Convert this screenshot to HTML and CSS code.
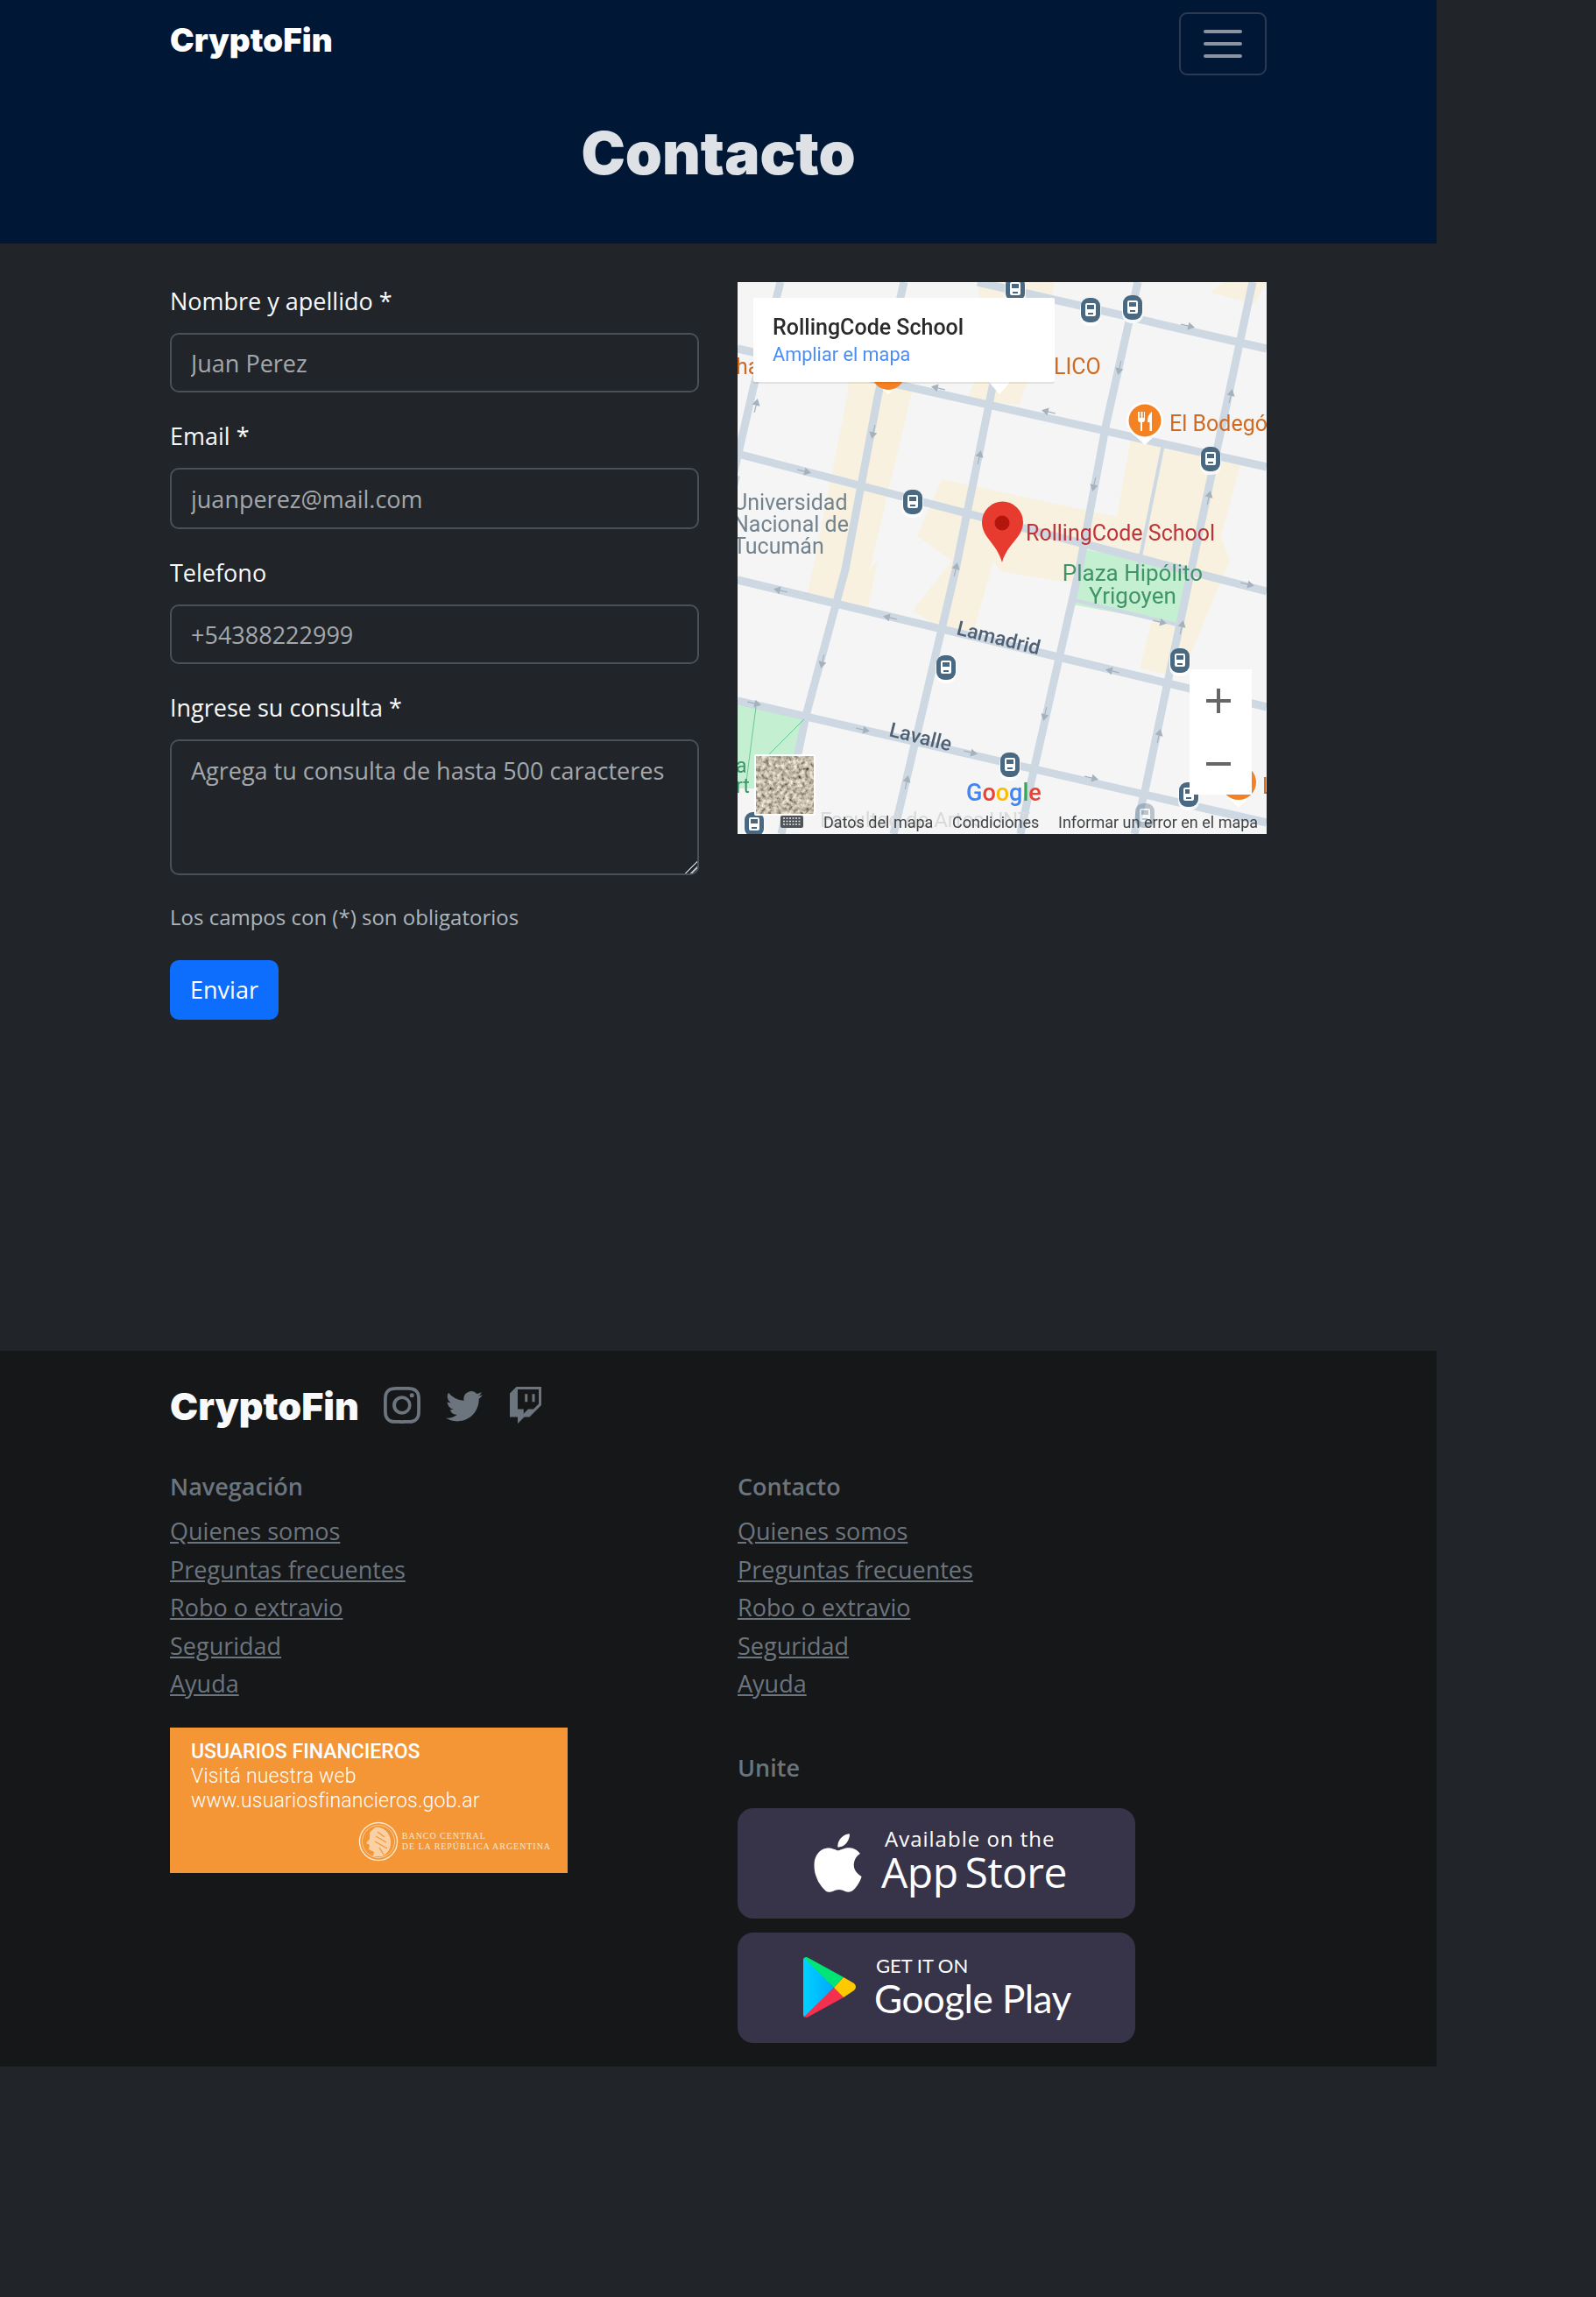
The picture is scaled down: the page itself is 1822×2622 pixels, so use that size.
FILE: index.html
```html
<!DOCTYPE html>
<html lang="es">
<head>
<meta charset="utf-8">
<title>CryptoFin - Contacto</title>
<link rel="stylesheet" href="styles.css">
</head>
<body>
<div class="page">
  <header class="hero">
    <nav class="topbar">
      <a class="brand" href="#">CryptoFin</a>
      <button class="toggler" type="button" aria-label="Menu"><span></span><span></span><span></span></button>
    </nav>
    <h1 class="hero-title">Contacto</h1>
  </header>

  <main class="main">
    <div class="cols">
      <form class="form">
        <div class="group">
          <label class="label">Nombre y apellido *</label>
          <input class="field" type="text" placeholder="Juan Perez">
        </div>
        <div class="group">
          <label class="label">Email *</label>
          <input class="field field-tall" type="email" placeholder="juanperez@mail.com">
        </div>
        <div class="group">
          <label class="label">Telefono</label>
          <input class="field" type="text" placeholder="+54388222999">
        </div>
        <div class="group group-last">
          <label class="label">Ingrese su consulta *</label>
          <textarea class="field area" placeholder="Agrega tu consulta de hasta 500 caracteres"></textarea>
        </div>
        <p class="hint">Los campos con (*) son obligatorios</p>
        <button class="send" type="button">Enviar</button>
      </form>

      <div class="map">
        <svg class="map-svg" viewBox="0 0 604 630" width="604" height="630" xmlns="http://www.w3.org/2000/svg">
          <defs>
            <filter id="soft" x="0" y="0" width="100%" height="100%"><feGaussianBlur stdDeviation="0.7"/></filter>
            <filter id="softer" x="-5%" y="-5%" width="110%" height="110%"><feGaussianBlur stdDeviation="0.45"/></filter>
            <filter id="sat" x="0" y="0" width="100%" height="100%">
              <feTurbulence type="fractalNoise" baseFrequency="0.22" numOctaves="3" seed="7"/>
              <feColorMatrix type="matrix" values="1.300 0 0 0 -0.100  1.250 0 0 0 -0.130  1.100 0 0 0 -0.150  0 0 0 0 1"/>
              <feGaussianBlur stdDeviation="0.6"/>
            </filter>
            <g id="bus">
              <rect x="-12" y="-14" width="24" height="31" rx="10" fill="#ffffff" opacity="0.8"/>
              <rect x="-11" y="-15" width="22" height="28" rx="9" fill="#4a6982"/>
              <rect x="-6" y="-9" width="12" height="15" rx="2" fill="#ffffff"/>
              <rect x="-4" y="-7" width="8" height="5" fill="#4a6982"/>
              <rect x="-3" y="2" width="6" height="2" fill="#4a6982"/>
            </g>
            <path id="arr" d="M-8 0H2M1 -3.500L7 0L1 3.500Z" fill="#a5b2bd" stroke="#a5b2bd" stroke-width="1.200"/>
          </defs>
          <g filter="url(#soft)">
            <rect width="604" height="630" fill="#f5f5f5"/>
            <g fill="#f8f1df">
              <polygon points="127,121 200,121 151,328 160,318 149,371 80,355 86,328"/>
              <polygon points="233,225 433,268 449,178 575,205 552,290 562,318 506,451 459,441 480,360 300,330 292,318 270,398 233,396 200,375 245,318 205,290"/>
              <polygon points="275,0 362,0 358,18 275,18"/>
              <polygon points="555,0 604,0 590,25 540,12"/>
              <polygon points="130,100 200,100 196,125 125,125"/>
              <polygon points="270,114 330,114 322,140 262,135"/>
            </g>
            <g fill="#c4f0d1">
              <polygon points="396,305 518,328 506,391 382,368"/>
              <polygon points="0,483 21,485 76,499 57,578 0,578"/>
            </g>
            <g fill="none" stroke="#cdd8e2" stroke-width="9">
              <path d="M274 0L604 76"/>
              <path d="M0 76L604 211"/>
              <path d="M0 196L604 353"/>
              <path d="M0 340L604 485"/>
              <path d="M0 478L604 617"/>
              <path d="M49 0L18 121L-5 221"/>
              <path d="M190 0L160 131L123 328L78 495L50 630"/>
              <path d="M320 0L292 115L249 328L192 571L178 630"/>
              <path d="M457 0L421 161L390 328L335 571L323 630"/>
              <path d="M588 0L555 155L518 328L465 581L453 630"/>
              <path d="M486 185L457 328" stroke-width="4"/>
              <path d="M0 221L-20 300L-20 350" stroke-width="6"/>
              <path d="M380 362L506 392" stroke-width="4"/>
            </g>
            <path d="M21 485L10 570M76 499L30 545" fill="none" stroke="#6cc596" stroke-width="1"/>
            <g>
              <use href="#arr" transform="translate(514 50) rotate(13)"/>
              <use href="#arr" transform="translate(229 121) rotate(193)"/>
              <use href="#arr" transform="translate(355 148) rotate(193)"/>
              <use href="#arr" transform="translate(76 216) rotate(13)"/>
              <use href="#arr" transform="translate(21 141) rotate(-77)"/>
              <use href="#arr" transform="translate(155 171) rotate(103)"/>
              <use href="#arr" transform="translate(276 200) rotate(-77)"/>
              <use href="#arr" transform="translate(436 98) rotate(103)"/>
              <use href="#arr" transform="translate(563 130) rotate(-77)"/>
              <use href="#arr" transform="translate(407 231) rotate(103)"/>
              <use href="#arr" transform="translate(538 246) rotate(-77)"/>
              <use href="#arr" transform="translate(49 352) rotate(193)"/>
              <use href="#arr" transform="translate(174 383) rotate(193)"/>
              <use href="#arr" transform="translate(249 328) rotate(-77)"/>
              <use href="#arr" transform="translate(582 345) rotate(13)"/>
              <use href="#arr" transform="translate(482 388) rotate(13)"/>
              <use href="#arr" transform="translate(507 394) rotate(-77)"/>
              <use href="#arr" transform="translate(97 433) rotate(103)"/>
              <use href="#arr" transform="translate(428 444) rotate(193)"/>
              <use href="#arr" transform="translate(19 481) rotate(13)"/>
              <use href="#arr" transform="translate(143 511) rotate(13)"/>
              <use href="#arr" transform="translate(266 537) rotate(13)"/>
              <use href="#arr" transform="translate(404 566) rotate(13)"/>
              <use href="#arr" transform="translate(351 493) rotate(103)"/>
              <use href="#arr" transform="translate(481 518) rotate(-77)"/>
              <use href="#arr" transform="translate(193 571) rotate(-77)"/>
            </g>
            <text class="m-faded" x="94" y="622">Facultad de Artes UNT</text>
            <use href="#bus" x="465" y="610" opacity="0.35"/>
            <use href="#bus" x="317" y="9"/>
            <use href="#bus" x="403" y="33"/>
            <use href="#bus" x="451" y="30"/>
            <use href="#bus" x="540" y="203"/>
            <use href="#bus" x="200" y="252"/>
            <use href="#bus" x="238" y="441"/>
            <use href="#bus" x="505" y="433"/>
            <use href="#bus" x="311" y="552"/>
            <use href="#bus" x="19" y="620"/>
            <use href="#bus" x="515" y="586"/>
            <g>
              <path d="M172 128L154 112H190Z" fill="#ffffff"/>
              <circle cx="172" cy="104" r="19" fill="#f58220"/>
              <path d="M299 128L285 112H313Z" fill="#ffffff"/>
              <path d="M465 186L446 168H484Z" fill="#ffffff"/>
              <circle cx="465" cy="158" r="21" fill="#ffffff"/>
              <circle cx="465" cy="158" r="18.500" fill="#f58220"/>
              <path d="M457 148V157Q457 160 460 160V170H462V160Q465 160 465 157V148H464V155H462.500V148H460.500V155H459V148ZM473 148Q468 151 468 160H470.500V170H473Z" fill="#ffffff"/>
              <path d="M572 600L552 580H592Z" fill="#ffffff"/>
              <circle cx="572" cy="571" r="20" fill="#f58220"/>
            </g>
            <g class="m-orange">
              <text x="-2" y="105">ha</text>
              <text x="361" y="105">LICO</text>
              <text x="493" y="170">El Bodegó</text>
              <text x="599" y="584">L</text>
            </g>
            <g class="m-uni">
              <text x="-5" y="260">Universidad</text>
              <text x="-5" y="285">Nacional de</text>
              <text x="-5" y="310">Tucumán</text>
            </g>
            <g class="m-park">
              <text x="451" y="341">Plaza Hipólito</text>
              <text x="451" y="367">Yrigoyen</text>
            </g>
            <g class="m-road">
              <text transform="translate(249 402) rotate(14)">Lamadrid</text>
              <text transform="translate(172 518) rotate(14)">Lavalle</text>
            </g>
            <g class="m-park-left">
              <text x="-2" y="560">a</text>
              <text x="-2" y="583">rt</text>
            </g>
            <text class="m-pin-label" x="329" y="295">RollingCode School</text>
            <path d="M302 320C296 298 279 292 279 274A23.500 23.500 0 0 1 326 274C326 292 308 298 302 320Z" fill="#e63b2e"/>
            <circle cx="302" cy="275" r="8.500" fill="#b3140d"/>
            <text class="m-google" x="261" y="592"><tspan fill="#4285f4">G</tspan><tspan fill="#ea4335">o</tspan><tspan fill="#fbbc05">o</tspan><tspan fill="#4285f4">g</tspan><tspan fill="#34a853">l</tspan><tspan fill="#ea4335">e</tspan></text>
            <g class="m-foot">
              <text x="98" y="623">Datos del mapa</text>
              <text x="245" y="623">Condiciones</text>
              <text x="366" y="623">Informar un error en el mapa</text>
            </g>
            <g>
              <rect x="49" y="609" width="26" height="14" rx="2" fill="#4d5357"/>
              <path d="M52 612H72M52 615.500H72M52 619H72" stroke="#e8e8e8" stroke-width="1.400" stroke-dasharray="2 1.500"/>
            </g>
            <rect x="19" y="539" width="70" height="70" rx="2" fill="#ffffff"/>
          </g>
          <rect x="21" y="541" width="66" height="66" filter="url(#sat)"/>
          <g filter="url(#softer)">
            <rect x="18" y="18" width="344" height="96" rx="2" fill="#000000" opacity="0.08" transform="translate(0 2)"/>
            <rect x="18" y="18" width="344" height="96" rx="2" fill="#ffffff"/>
            <text class="m-title" x="40" y="60">RollingCode School</text>
            <text class="m-link" x="40" y="90">Ampliar el mapa</text>
            <rect x="516" y="442" width="71" height="143" fill="#ffffff"/>
            <path d="M549 464V492M535 478H563M535 550H563" stroke="#666666" stroke-width="4" fill="none"/>
          </g>
        </svg>
      </div>
    </div>
  </main>

  <footer class="footer">
    <div class="foot-top">
      <a class="foot-brand" href="#">CryptoFin</a>
      <div class="socials">
        <svg class="soc soc-ig" viewBox="0 0 16 16"><path d="M8 0C5.829 0 5.556.01 4.703.048 3.85.088 3.269.222 2.76.42a3.917 3.917 0 0 0-1.417.923A3.927 3.927 0 0 0 .42 2.76C.222 3.268.087 3.85.048 4.7.01 5.555 0 5.827 0 8.001c0 2.172.01 2.444.048 3.297.04.852.174 1.433.372 1.942.205.526.478.972.923 1.417.444.445.89.719 1.416.923.51.198 1.09.333 1.942.372C5.555 15.99 5.827 16 8 16s2.444-.01 3.298-.048c.851-.04 1.434-.174 1.943-.372a3.916 3.916 0 0 0 1.416-.923c.445-.445.718-.891.923-1.417.197-.509.332-1.09.372-1.942C15.99 10.445 16 10.173 16 8s-.01-2.445-.048-3.299c-.04-.851-.175-1.433-.372-1.941a3.926 3.926 0 0 0-.923-1.417A3.911 3.911 0 0 0 13.24.42c-.51-.198-1.092-.333-1.943-.372C10.443.01 10.172 0 7.998 0h.003zm-.717 1.442h.718c2.136 0 2.389.007 3.232.046.78.035 1.204.166 1.486.275.373.145.64.319.92.599.28.28.453.546.598.92.11.281.24.705.275 1.485.039.843.047 1.096.047 3.231s-.008 2.389-.047 3.232c-.035.78-.166 1.203-.275 1.485a2.47 2.47 0 0 1-.599.919c-.28.28-.546.453-.92.598-.28.11-.704.24-1.485.276-.843.038-1.096.047-3.232.047s-2.39-.009-3.233-.047c-.78-.036-1.203-.166-1.485-.276a2.478 2.478 0 0 1-.92-.598 2.48 2.48 0 0 1-.6-.92c-.109-.281-.24-.705-.275-1.485-.038-.843-.046-1.096-.046-3.233 0-2.136.008-2.388.046-3.231.036-.78.166-1.204.276-1.486.145-.373.319-.64.599-.92.28-.28.546-.453.92-.598.282-.11.705-.24 1.485-.276.738-.034 1.024-.044 2.515-.045v.002zm4.988 1.328a.96.96 0 1 0 0 1.92.96.96 0 0 0 0-1.92zm-4.27 1.122a4.109 4.109 0 1 0 0 8.217 4.109 4.109 0 0 0 0-8.217zm0 1.441a2.667 2.667 0 1 1 0 5.334 2.667 2.667 0 0 1 0-5.334z"/></svg>
        <svg class="soc soc-tw" viewBox="0 0 16 16"><path d="M5.026 15c6.038 0 9.341-5.003 9.341-9.334 0-.14 0-.282-.006-.422A6.685 6.685 0 0 0 16 3.542a6.658 6.658 0 0 1-1.889.518 3.301 3.301 0 0 0 1.447-1.817 6.533 6.533 0 0 1-2.087.793A3.286 3.286 0 0 0 7.875 6.03a9.325 9.325 0 0 1-6.767-3.429 3.289 3.289 0 0 0 1.018 4.382A3.323 3.323 0 0 1 .64 6.575v.045a3.288 3.288 0 0 0 2.632 3.218 3.203 3.203 0 0 1-.865.115 3.23 3.23 0 0 1-.614-.057 3.283 3.283 0 0 0 3.067 2.277A6.588 6.588 0 0 1 .78 13.58a6.32 6.32 0 0 1-.78-.045A9.344 9.344 0 0 0 5.026 15z"/></svg>
        <svg class="soc soc-tc" viewBox="1 0 13.714 16"><path d="M3.857 0 1 2.857v10.286h3.429V16l2.857-2.857H9.57L14.714 8V0H3.857zm9.714 7.429-2.285 2.285H9l-2 2v-2H4.429V1.143h9.142v6.286z"/><path d="M11.857 3.143h-1.143V6.57h1.143V3.143zm-3.143 0H7.571V6.57h1.143V3.143z"/></svg>
      </div>
    </div>

    <div class="cols foot-cols">
      <div class="foot-col">
        <h5 class="foot-head">Navegación</h5>
        <ul class="links">
          <li><a href="#">Quienes somos</a></li>
          <li><a href="#">Preguntas frecuentes</a></li>
          <li><a href="#">Robo o extravio</a></li>
          <li><a href="#">Seguridad</a></li>
          <li><a href="#">Ayuda</a></li>
        </ul>
        <div class="banner">
          <div class="banner-strong">USUARIOS FINANCIEROS</div>
          <div class="banner-line">Visitá nuestra web</div>
          <div class="banner-line">www.usuariosfinancieros.gob.ar</div>
          <div class="bcra">
            <svg class="seal" viewBox="0 0 46 46" width="46" height="46">
              <circle cx="23" cy="23" r="21.500" fill="none" stroke="#fbe6cb" stroke-width="1.500"/>
              <circle cx="23" cy="23" r="18.500" fill="none" stroke="#fbe6cb" stroke-width="0.700"/>
              <path d="M19 7C27 5 36 12 37 22C38 30 34 37 27 40L17 40L18 35L12 32L13 27L9 25L13 20L13 13Z" fill="#fbe6cb" opacity="0.75"/>
              <path d="M22 12L30 18M20 17L32 24M19 23L33 31M24 30L29 38" stroke="#f49536" stroke-width="1.300" fill="none"/>
            </svg>
            <div class="bcra-text">
              <div class="bcra-one">BANCO CENTRAL</div>
              <div class="bcra-two">DE LA REPÚBLICA ARGENTINA</div>
            </div>
          </div>
        </div>
      </div>
      <div class="foot-col">
        <h5 class="foot-head">Contacto</h5>
        <ul class="links">
          <li><a href="#">Quienes somos</a></li>
          <li><a href="#">Preguntas frecuentes</a></li>
          <li><a href="#">Robo o extravio</a></li>
          <li><a href="#">Seguridad</a></li>
          <li><a href="#">Ayuda</a></li>
        </ul>
        <h5 class="foot-head foot-head-unite">Unite</h5>
        <a class="badge badge-apple" href="#">
          <svg class="apple" viewBox="0.9 0 13.700 16" fill="#ffffff"><path d="M11.182.008C11.148-.03 9.923.023 8.857 1.18c-1.066 1.156-.902 2.482-.878 2.516.024.034 1.52.087 2.475-1.258.955-1.345.762-2.391.728-2.43zm3.314 11.733c-.048-.096-2.325-1.234-2.113-3.422.212-2.189 1.675-2.789 1.698-2.854.023-.065-.597-.79-1.254-1.157a3.692 3.692 0 0 0-1.563-.434c-.108-.003-.483-.095-1.254.116-.508.139-1.653.589-1.968.607-.316.018-1.256-.522-2.267-.665-.647-.1-1.333.105-1.824.302-.49.197-1.422.759-2.074 2.242-.652 1.483-.311 3.832-.067 4.562.244.73.625 1.925 1.273 2.796.576.984 1.34 1.667 1.659 1.899.319.232 1.219.386 1.843.067.502-.308 1.408-.485 1.766-.472.357.013 1.061.154 1.782.539.571.197 1.111.115 1.652-.105.541-.221 1.324-1.059 2.238-2.758.347-.79.505-1.217.473-1.282z"/></svg>
          <span class="badge-text badge-text-apple">
            <span class="ap-small">Available on the</span>
            <span class="ap-big">App Store</span>
          </span>
        </a>
        <a class="badge badge-play" href="#">
          <svg class="play" viewBox="0 0 61 69" width="61" height="69">
            <defs>
              <linearGradient id="pb" x1="0" y1="0" x2="1" y2="0"><stop offset="0" stop-color="#00d2ff"/><stop offset="1" stop-color="#00a8ff"/></linearGradient>
            </defs>
            <path d="M0 3Q0 0 3 1L35 35L3 68Q0 69 0 66Z" fill="url(#pb)"/>
            <path d="M1 1Q3 -1 6 1L46 23L35 35Z" fill="#00e676"/>
            <path d="M1 68Q3 70 6 68L46 46L35 35Z" fill="#f5304f"/>
            <path d="M46 23L58 30Q62 34 58 38L46 46L35 35Z" fill="#ffc800"/>
          </svg>
          <span class="badge-text badge-text-play">
            <span class="gp-small">GET IT ON</span>
            <span class="gp-big">Google Play</span>
          </span>
        </a>
      </div>
    </div>
  </footer>
</div>
</body>
</html>
```
FILE: styles.css
```css
* { box-sizing: border-box; }
html, body { margin: 0; padding: 0; }
body {
  background: #212529;
  color: #f8f9fa;
  font-family: "Open Sans", "Noto Sans", sans-serif;
  font-size: 27px;
  min-height: 2622px;
}
a { color: inherit; }
.page { width: 1640px; }

.hero { background: #001736; height: 278px; padding: 14px 194px 0 194px; }
.topbar { display: flex; justify-content: space-between; align-items: flex-start; }
.brand {
  font-family: Inter, sans-serif;
  font-weight: 900;
  font-size: 37px;
  line-height: 64px;
  color: #ffffff;
  text-decoration: none;
}
.toggler {
  width: 100px;
  height: 72px;
  background: transparent;
  border: 2px solid #2b3a52;
  border-radius: 9px;
  display: flex;
  flex-direction: column;
  align-items: center;
  justify-content: center;
  gap: 10px;
  padding: 0;
}
.toggler span { display: block; width: 44px; height: 4px; border-radius: 2px; background: #8b93a1; }
.hero-title {
  margin: 49px -194px 0;
  text-align: center;
  font-family: Inter, sans-serif;
  font-weight: 900;
  font-size: 67.500px;
  line-height: 80px;
  color: #dee2e6;
}

.main { min-height: 1264px; padding: 44px 194px 0 194px; }
.cols { display: grid; grid-template-columns: 604px 604px; column-gap: 44px; }
.form { padding-top: 2px; }
.group { margin-bottom: 30px; }
.group-last { margin-bottom: 0; }
.label { display: block; line-height: 40px; margin-bottom: 16px; color: #f8f9fa; }
.field {
  display: block;
  width: 100%;
  height: 68px;
  padding: 0 22px;
  background: #212529;
  border: 2px solid #495057;
  border-radius: 10px;
  color: #dee2e6;
  font-family: inherit;
  font-size: 27px;
  outline: none;
}
.field-tall { height: 70px; }
.area { height: 155px; padding: 13px 22px; line-height: 42px; resize: vertical; }
.area::-webkit-resizer {
  background: linear-gradient(135deg, transparent 50%, #b5b8bb 50%, #b5b8bb 58%, transparent 58%, transparent 72%, #b5b8bb 72%, #b5b8bb 80%, transparent 80%);
}
.field::placeholder { color: #a4a8ac; opacity: 1; }
.hint { margin: 30px 0 0; font-size: 24px; line-height: 36px; color: #adb5bd; }
.send {
  display: block;
  margin-top: 31px;
  width: 124px;
  height: 68px;
  padding: 0 0 2px;
  border: 0;
  border-radius: 10px;
  background: #0d6efd;
  color: #ffffff;
  font-family: inherit;
  font-size: 27px;
}

.map { width: 604px; height: 630px; overflow: hidden; }
.map-svg { display: block; }
.map-svg text { font-family: Roboto, sans-serif; }
.m-orange text { font-size: 25px; fill: #d06a20; }
.m-uni text { font-size: 25px; fill: #72838f; }
.m-park text { font-size: 26px; fill: #3f9469; text-anchor: middle; }
.m-road text { font-size: 23px; font-weight: 500; fill: #4f6175; }
.m-park-left text { font-size: 23px; fill: #3f9469; }
.m-pin-label { font-size: 25px; fill: #bd3537; }
.m-faded { font-size: 24px; fill: #dadada; }
.m-google { font-size: 27px; font-weight: 500; }
.m-foot text { font-size: 18px; fill: #3f4447; }
.m-title { font-size: 25px; font-weight: 500; fill: #2c2c2c; }
.m-link { font-size: 21.700px; fill: #4a8df5; }

.footer { background: #161719; height: 817px; padding: 33px 194px 0 194px; color: #6c757d; }
.foot-top { display: flex; align-items: center; height: 60px; }
.foot-brand {
  font-family: Inter, sans-serif;
  font-weight: 900;
  font-size: 43px;
  line-height: 60px;
  color: #f8f9fa;
  text-decoration: none;
  width: 244px;
  white-space: nowrap;
}
.socials { display: flex; align-items: center; height: 42px; margin-top: -2px; }
.soc { display: block; fill: #6c757d; }
.soc-ig { width: 42px; height: 42px; }
.soc-tw { width: 42px; height: 42px; margin-left: 29px; }
.soc-tc { width: 36px; height: 42px; margin-left: 31px; }

.foot-cols { margin-top: 41px; }
.foot-head { margin: 0 0 8px; font-size: 27px; line-height: 42px; font-weight: 600; color: #6c757d; }
.foot-head-unite { margin: 53px 0 25px; }
.links { list-style: none; margin: 0; padding: 0; }
.links li { height: 43.500px; line-height: 43.500px; }
.links a { color: #6c757d; text-decoration: underline; }

.banner {
  margin-top: 28px;
  width: 454px;
  height: 166px;
  background: #f49536;
  padding: 14px 24px 0 24px;
  color: #ffffff;
  font-family: Roboto, sans-serif;
}
.banner-strong { font-size: 23px; line-height: 28px; font-weight: 500; }
.banner-line { font-size: 23px; line-height: 28px; font-weight: 300; letter-spacing: 0.200px; }
.bcra { display: flex; justify-content: flex-end; align-items: center; gap: 4px; margin-top: 9px; margin-right: -5px; }
.bcra-text { font-family: "Liberation Serif", serif; color: #fbe6cb; font-size: 10px; line-height: 12px; letter-spacing: 0.950px; white-space: nowrap; }

.badge {
  display: flex;
  align-items: center;
  width: 454px;
  height: 126px;
  border-radius: 18px;
  background: #37344a;
  color: #ffffff;
  text-decoration: none;
  margin-bottom: 16px;
}
.badge-apple { padding-left: 85px; gap: 22px; }
.badge-play { padding-left: 75px; gap: 20px; }
.apple { width: 57px; height: 67px; display: block; }
.badge-text { display: flex; flex-direction: column; }
.badge-text-apple { padding-bottom: 10px; }
.badge-text-play { padding-bottom: 4px; }
.ap-small { font-family: "Open Sans", sans-serif; font-size: 24px; line-height: 30px; letter-spacing: 1px; padding-left: 4px; }
.ap-big { font-family: "Open Sans", sans-serif; font-size: 48px; line-height: 46px; letter-spacing: -0.500px; word-spacing: -4px; }
.gp-small { font-family: Lato, sans-serif; font-size: 22px; line-height: 28px; padding-left: 2px; }
.gp-big { font-family: Lato, sans-serif; font-size: 44px; line-height: 46px; letter-spacing: -0.500px; }
```
